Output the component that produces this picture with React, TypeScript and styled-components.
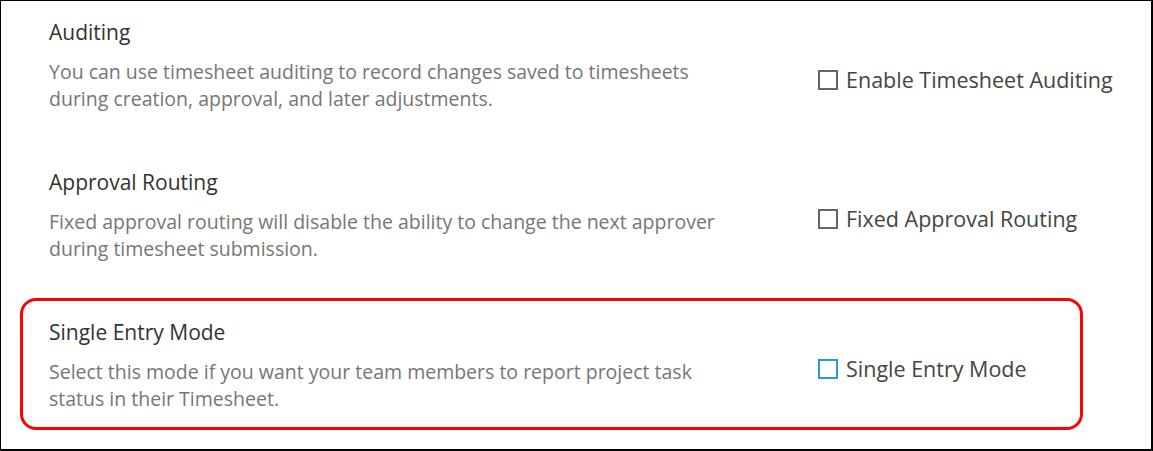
import React, { useState } from 'react';
import styled, { createGlobalStyle } from 'styled-components';

const colors = {
    frame: '#000000',
    title: '#333333',
    text: '#767676',
    label: '#444444',
    box: '#666666',
    focus: '#2b9ad6',
    highlight: '#ff0000',
};

interface Setting {
    id: string;
    title: string;
    description: string;
    label: string;
    checkboxOffset: number;
    highlighted?: boolean;
}

const settings: Setting[] = [
    {
        id: 'auditing',
        title: 'Auditing',
        description:
            'You can use timesheet auditing to record changes saved to timesheets during creation, approval, and later adjustments.',
        label: 'Enable Timesheet Auditing',
        checkboxOffset: 47,
    },
    {
        id: 'routing',
        title: 'Approval Routing',
        description:
            'Fixed approval routing will disable the ability to change the next approver during timesheet submission.',
        label: 'Fixed Approval Routing',
        checkboxOffset: 36,
    },
    {
        id: 'single-entry',
        title: 'Single Entry Mode',
        description:
            'Select this mode if you want your team members to report project task status in their Timesheet.',
        label: 'Single Entry Mode',
        checkboxOffset: 36,
        highlighted: true,
    },
];

const App = () => {
    const [checked, setChecked] = useState<Record<string, boolean>>({});

    return (
        <>
            <GlobalStyle />
            <Frame>
                <SectionList>
                    {settings.map((setting) => (
                        <Section key={setting.id} $highlighted={setting.highlighted}>
                            <Info>
                                <Title>{setting.title}</Title>
                                <Description>{setting.description}</Description>
                            </Info>
                            <CheckboxLabel $offset={setting.checkboxOffset}>
                                <HiddenInput
                                    type="checkbox"
                                    checked={!!checked[setting.id]}
                                    onChange={(e) =>
                                        setChecked({ ...checked, [setting.id]: e.target.checked })
                                    }
                                />
                                <Box
                                    $focused={setting.highlighted}
                                    $checked={!!checked[setting.id]}
                                />
                                {setting.label}
                            </CheckboxLabel>
                        </Section>
                    ))}
                </SectionList>
            </Frame>
        </>
    );
};

const GlobalStyle = createGlobalStyle`
    body {
        margin: 0;
        background: #ffffff;
        font-family: 'Open Sans', 'Noto Sans', sans-serif;
    }
`;

const Frame = styled.div`
    box-sizing: border-box;
    width: 1153px;
    height: 451px;
    overflow: hidden;
    border-top: 1px solid ${colors.frame};
    border-left: 1px solid ${colors.frame};
    border-right: 2px solid ${colors.frame};
    border-bottom: 2px solid ${colors.frame};
    padding-left: 19px;
`;

// the screenshot crops the top of the first section by a few pixels
const SectionList = styled.div`
    display: flex;
    flex-direction: column;
    gap: 18px;
    margin-top: -3px;
`;

const Section = styled.div<{ $highlighted?: boolean }>`
    box-sizing: border-box;
    width: 1063px;
    height: 132px;
    border: 3px solid ${({ $highlighted }) => ($highlighted ? colors.highlight : 'transparent')};
    border-radius: 16px;
    padding: 18px 0 0 26px;
    display: grid;
    grid-template-columns: 769px auto;
    align-items: start;
`;

const Info = styled.div`
    display: flex;
    flex-direction: column;
    gap: 12px;
`;

const Title = styled.div`
    font-size: 21px;
    line-height: 27px;
    color: ${colors.title};
`;

const Description = styled.div`
    font-size: 19.5px;
    line-height: 27px;
    color: ${colors.text};
    max-width: 690px;
`;

const CheckboxLabel = styled.label<{ $offset: number }>`
    display: flex;
    align-items: center;
    gap: 8px;
    margin-top: ${({ $offset }) => $offset}px;
    font-size: 21.5px;
    line-height: 27px;
    color: ${colors.label};
    white-space: nowrap;
    cursor: pointer;
`;

const HiddenInput = styled.input`
    display: none;
`;

const Box = styled.span<{ $focused?: boolean; $checked: boolean }>`
    box-sizing: border-box;
    flex: none;
    width: 20px;
    height: 20px;
    border: 2px solid ${({ $focused }) => ($focused ? colors.focus : colors.box)};
    background: ${({ $checked }) => ($checked ? colors.focus : 'transparent')};
`;

export default App;
